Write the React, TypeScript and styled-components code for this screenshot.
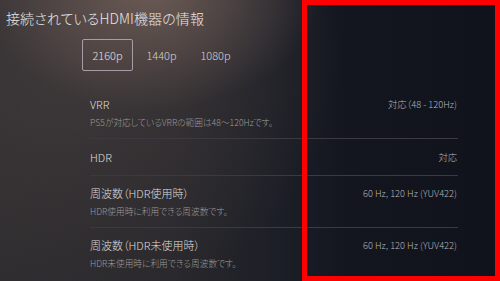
import React from 'react';
import styled, { createGlobalStyle } from 'styled-components';

const GlobalStyle = createGlobalStyle`
    html, body {
        margin: 0;
        padding: 0;
        width: 500px;
        height: 281px;
        overflow: hidden;
        background: #10131c;
    }
    body {
        font-family: "Noto Sans CJK JP", "Noto Sans", sans-serif;
        font-feature-settings: "palt";
        font-weight: 300;
    }
`;

const Screen = styled.div`
    position: relative;
    width: 500px;
    height: 281px;
    overflow: hidden;
    background:
        radial-gradient(ellipse 170px 120px at 150px -10px, rgba(125, 104, 96, 0.75), rgba(125, 104, 96, 0) 100%),
        radial-gradient(ellipse 260px 240px at 80px 60px, rgba(70, 62, 62, 0.7), rgba(70, 62, 62, 0) 100%),
        linear-gradient(to right, #2f2d30 0%, #29282c 35%, #1d1f27 55%, #13161f 70%, #10131c 100%);
    display: flex;
    flex-direction: column;
`;

const Title = styled.h1`
    margin: 0;
    padding: 8px 0 0 6px;
    font-size: 14px;
    line-height: 20px;
    font-weight: 300;
    color: #e8e6e6;
    letter-spacing: 0.1px;
`;

const Tabs = styled.div`
    display: flex;
    margin: 11px 0 0 82px;
    gap: 3px;
`;

const Tab = styled.div<{ $active?: boolean }>`
    width: 51px;
    height: 32px;
    box-sizing: border-box;
    display: flex;
    align-items: center;
    justify-content: center;
    font-size: 11px;
    color: ${p => p.$active ? '#e4e0e0' : '#d6d2d2'};
    border: 1.5px solid ${p => p.$active ? '#a89ca6' : 'transparent'};
    border-radius: 2px;
`;

const List = styled.div`
    margin: 16px 0 0 90px;
    width: 368px;
    display: flex;
    flex-direction: column;
`;

const Row = styled.div<{ $last?: boolean, $withNote?: boolean }>`
    display: flex;
    justify-content: space-between;
    align-items: flex-start;
    padding: ${p => p.$withNote ? '10px' : '11px'} 0 ${p => p.$last ? '0' : p.$withNote ? '9px' : '11px'};
    border-bottom: 1px solid ${p => p.$last ? 'transparent' : '#3a3a40'};
`;

const Texts = styled.div`
    display: flex;
    flex-direction: column;
`;

const Label = styled.div`
    font-size: 11px;
    line-height: 14px;
    color: #dedcdc;
`;

const Note = styled.div`
    margin-top: 6px;
    font-size: 8.7px;
    line-height: 12px;
    color: #9c9a9c;
`;

const Value = styled.div`
    font-size: 9.3px;
    line-height: 14px;
    color: #b6b6ba;
    padding-right: 1px;
`;

const Highlight = styled.div`
    position: absolute;
    left: 302px;
    top: 0;
    right: 0;
    bottom: 0;
    border: 5px solid #ff0000;
    pointer-events: none;
`;

interface Item {
    label: string,
    note?: string,
    value: string
}

const items: Item[] = [
    { label: 'VRR', note: 'PS5が対応しているVRRの範囲は48～120Hzです。', value: '対応（48 - 120Hz)' },
    { label: 'HDR', value: '対応' },
    { label: '周波数（HDR使用時）', note: 'HDR使用時に利用できる周波数です。', value: '60 Hz, 120 Hz (YUV422)' },
    { label: '周波数（HDR未使用時）', note: 'HDR未使用時に利用できる周波数です。', value: '60 Hz, 120 Hz (YUV422)' },
];

export default function App() {
    return (
        <Screen>
            <GlobalStyle />
            <Title>接続されているHDMI機器の情報</Title>
            <Tabs>
                <Tab $active>2160p</Tab>
                <Tab>1440p</Tab>
                <Tab>1080p</Tab>
            </Tabs>
            <List>
                {items.map((item, i) => (
                    <Row key={i} $last={i === items.length - 1} $withNote={!!item.note}>
                        <Texts>
                            <Label>{item.label}</Label>
                            {item.note && <Note>{item.note}</Note>}
                        </Texts>
                        <Value>{item.value}</Value>
                    </Row>
                ))}
            </List>
            <Highlight />
        </Screen>
    );
}
